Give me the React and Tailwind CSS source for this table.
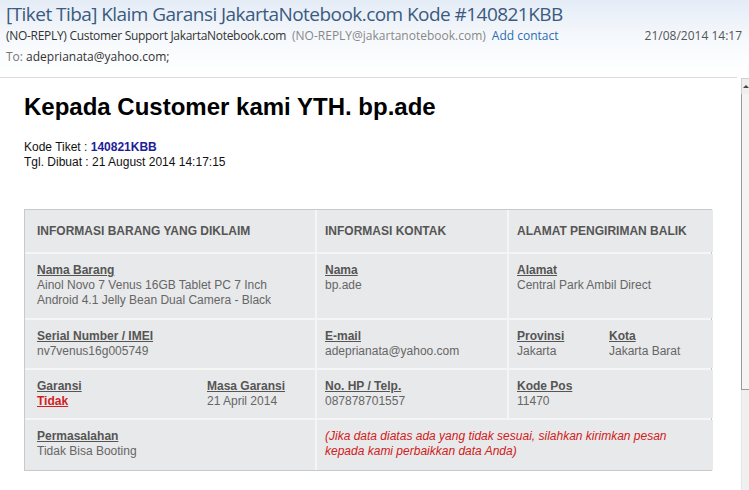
import React from 'react';

const ui = { fontFamily: '"Open Sans", "Noto Sans", sans-serif' };
const arial = { fontFamily: '"Liberation Sans", Arial, sans-serif' };

function Label({ children, red }) {
  return (
    <div className={`font-bold underline ${red ? 'text-[#d01f1f]' : 'text-[#555]'}`}>{children}</div>
  );
}

function Cell({ children, first, className = '' }) {
  return (
    <div className={`bg-[#e8e9ea] ${first ? 'pl-3' : 'pl-2'} pt-[9px] ${className}`}>{children}</div>
  );
}

export default function App() {
  return (
    <div className="w-[749px] h-[490px] overflow-hidden bg-white flex flex-col">
      {/* Message header */}
      <div className="h-[77px] bg-gradient-to-b from-[#e4ecf6] via-[#f6f9fc] to-white pl-[6px] pr-[7px]" style={ui}>
        <div className="text-[19px] leading-[26px] text-[#3c5a80] pt-[1px] tracking-[-0.55px]">
          [Tiket Tiba] Klaim Garansi JakartaNotebook.com Kode #140821KBB
        </div>
        <div className="flex items-center text-[12px] leading-[16px] mt-[1px]">
          <span className="text-[#333] tracking-[-0.3px]">(NO-REPLY) Customer Support JakartaNotebook.com</span>
          <span className="text-[#888] ml-[6px]">(NO-REPLY@jakartanotebook.com)</span>
          <span className="text-[#2b6cb3] ml-[6px]">Add contact</span>
          <span className="text-[#555] ml-auto">21/08/2014 14:17</span>
        </div>
        <div className="text-[12px] leading-[16px] mt-[5px]">
          <span className="text-[#777]">To: </span>
          <span className="text-[#333]">adeprianata@yahoo.com;</span>
        </div>
      </div>

      <div className="flex flex-1 min-h-0">
        {/* Body */}
        <div className="w-[737px] border-t border-[#dcdcdc] pl-6" style={arial}>
          <h1 className="text-[24px] leading-[28px] font-bold text-black mt-[15px]">
            Kepada Customer kami YTH. bp.ade
          </h1>
          <div className="text-[12px] leading-[15px] text-[#111] mt-[19px]">
            <div>
              Kode Tiket : <span className="font-bold text-[#1d1d9a]">140821KBB</span>
            </div>
            <div>Tgl. Dibuat : 21 August 2014 14:17:15</div>
          </div>

          {/* Claim table */}
          <div className="mt-[39px] w-[688px] border border-[#c9c9c9] bg-[#f5f5f5] grid grid-cols-[290px_190px_204px] grid-rows-[42px_64px_48px_48px_50px] gap-[2px] text-[12px] leading-[15px] text-[#666]">
            <div className="bg-[#e8e9ea] pl-3 flex items-center font-bold text-[#555]">INFORMASI BARANG YANG DIKLAIM</div>
            <div className="bg-[#e8e9ea] pl-2 flex items-center font-bold text-[#555]">INFORMASI KONTAK</div>
            <div className="bg-[#e8e9ea] pl-2 flex items-center font-bold text-[#555]">ALAMAT PENGIRIMAN BALIK</div>

            <Cell first>
              <Label>Nama Barang</Label>
              <div>Ainol Novo 7 Venus 16GB Tablet PC 7 Inch</div>
              <div>Android 4.1 Jelly Bean Dual Camera - Black</div>
            </Cell>
            <Cell>
              <Label>Nama</Label>
              <div>bp.ade</div>
            </Cell>
            <Cell>
              <Label>Alamat</Label>
              <div>Central Park Ambil Direct</div>
            </Cell>

            <Cell first>
              <Label>Serial Number / IMEI</Label>
              <div>nv7venus16g005749</div>
            </Cell>
            <Cell>
              <Label>E-mail</Label>
              <div>adeprianata@yahoo.com</div>
            </Cell>
            <Cell className="flex">
              <div className="w-[92px]">
                <Label>Provinsi</Label>
                <div>Jakarta</div>
              </div>
              <div>
                <Label>Kota</Label>
                <div>Jakarta Barat</div>
              </div>
            </Cell>

            <Cell first className="flex">
              <div className="w-[170px]">
                <Label>Garansi</Label>
                <Label red>Tidak</Label>
              </div>
              <div>
                <Label>Masa Garansi</Label>
                <div>21 April 2014</div>
              </div>
            </Cell>
            <Cell>
              <Label>No. HP / Telp.</Label>
              <div>087878701557</div>
            </Cell>
            <Cell>
              <Label>Kode Pos</Label>
              <div>11470</div>
            </Cell>

            <Cell first>
              <Label>Permasalahan</Label>
              <div>Tidak Bisa Booting</div>
            </Cell>
            <Cell className="col-span-2 italic text-[#d02020]">
              <div>(Jika data diatas ada yang tidak sesuai, silahkan kirimkan pesan</div>
              <div>kepada kami perbaikkan data Anda)</div>
            </Cell>
          </div>
        </div>

        {/* Scrollbar (clipped) */}
        <div className="ml-auto w-[8px] flex flex-col pt-[1px]">
          <div className="h-[16px] bg-[#eeeeee] border-l border-t border-[#d0d0d0] flex items-center justify-center">
            <div className="w-0 h-0 border-l-[3px] border-r-[3px] border-b-[3px] border-l-transparent border-r-transparent border-b-[#444]" />
          </div>
          <div className="h-[296px] border-l border-b border-[#9a9a9a] bg-[#f4f4f4]" />
          <div className="flex-1 border-l border-[#e4e4e4] bg-[#f0f0f0]" />
        </div>
      </div>
    </div>
  );
}
